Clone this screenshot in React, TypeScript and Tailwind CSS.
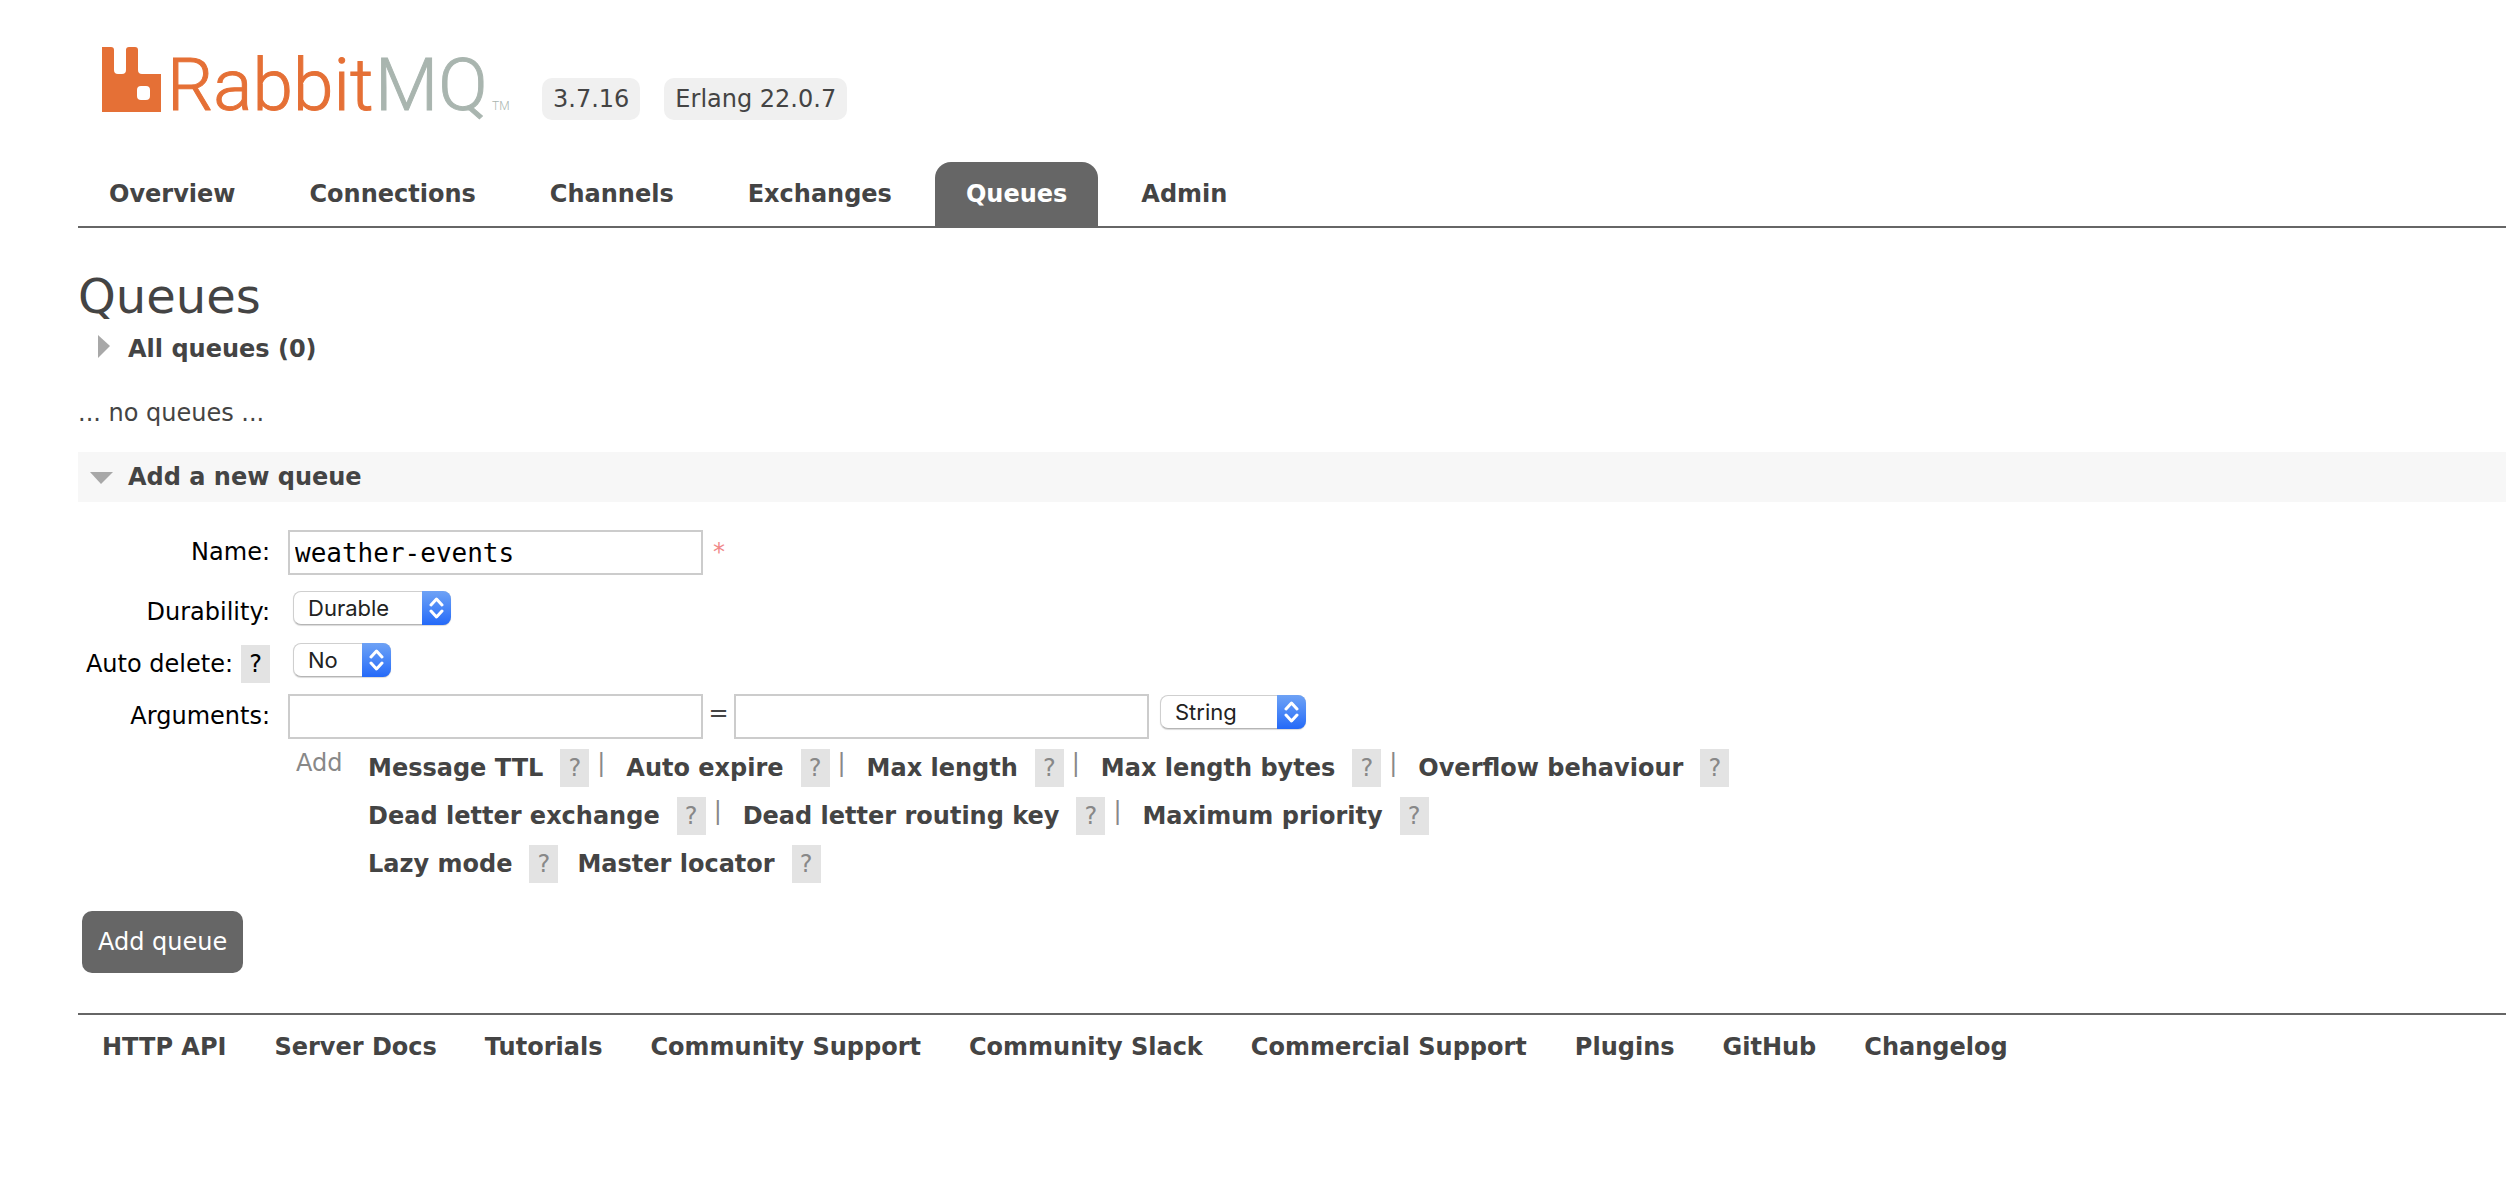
import type { ReactNode } from 'react';

const TABS = ['Overview', 'Connections', 'Channels', 'Exchanges', 'Queues', 'Admin'];

const ARGUMENT_ROWS = [
  ['Message TTL', 'Auto expire', 'Max length', 'Max length bytes', 'Overflow behaviour'],
  ['Dead letter exchange', 'Dead letter routing key', 'Maximum priority'],
  ['Lazy mode', 'Master locator'],
];

const FOOTER_LINKS = [
  'HTTP API',
  'Server Docs',
  'Tutorials',
  'Community Support',
  'Community Slack',
  'Commercial Support',
  'Plugins',
  'GitHub',
  'Changelog',
];

function Logo() {
  return (
    <svg width="416" height="104" viewBox="0 0 416 104" role="img" aria-label="RabbitMQ">
      <path
        fill="#e57036"
        fillRule="evenodd"
        d="M0 19h9q3 0 3 3v20q0 4 4 4h4q4 0 4-4v-20q0-3 3-3h6q3 0 3 3v20q0 4 4 4h19v38h-59zM39 58q-4 0-4 4v6q0 4 4 4h5q4 0 4-4v-6q0-4-4-4z"
      />
      <g fontFamily="Roboto, sans-serif" fontWeight="300">
        <text x="65" y="82" fontSize="73" fill="#e57036" stroke="#e57036">
          Rabbit
        </text>
        <text x="273" y="82" fontSize="73" fill="#a9b5af" stroke="#a9b5af">
          MQ
        </text>
        <text x="390" y="82" fontSize="12" fill="#a9b5af">
          TM
        </text>
      </g>
    </svg>
  );
}

function Version({ children }: { children: ReactNode }) {
  return <span className="rounded-[10px] bg-[#f0f0f0] px-[11px] py-[7px] leading-7">{children}</span>;
}

function Help({ topic }: { topic: string }) {
  return (
    <button type="button" aria-label={`Help: ${topic}`} className="h-[38px] w-[29px] bg-[#e3e3e3]">
      ?
    </button>
  );
}

function SectionTitle({ open, children }: { open?: boolean; children: ReactNode }) {
  return (
    <h2 className={open ? 'bg-[#f7f7f7]' : undefined}>
      <button type="button" aria-expanded={!!open} className="flex h-[50px] items-center font-bold">
        <svg width="50" height="28" viewBox="0 0 50 28" fill="#a8a8a8" aria-hidden>
          {open ? <path d="M12 9h23l-12 12z" /> : <path d="M20 0v23l12-12z" />}
        </svg>
        {children}
      </button>
    </h2>
  );
}

// Drop-down with the blue up/down handle on its right side.
function Select({ id, label, options, width }: { id: string; label?: string; options: string[]; width: string }) {
  return (
    <div className={`relative mt-px h-[34px] ${width}`}>
      <select
        id={id}
        aria-label={label}
        className="h-full w-full appearance-none rounded-lg border border-[#cfcfcf] border-b-[#b5b5b5] bg-white pl-[14px] font-[Inter,sans-serif] text-[22px] leading-7 text-[#222] shadow-[0_1px_1px_rgba(0,0,0,0.15)]"
      >
        {options.map((o) => (
          <option key={o}>{o}</option>
        ))}
      </select>
      <span className="pointer-events-none absolute inset-y-0 right-0 flex w-[29px] items-center justify-center rounded-r-lg bg-linear-to-b from-[#6ea2f5] to-[#2469f8]">
        <svg width="15" height="22" viewBox="0 0 15 22" fill="none" stroke="#fff" strokeWidth="3" aria-hidden>
          <path d="M2 8l5.500-6 5.500 6M2 14l5.500 6 5.500-6" strokeLinecap="round" strokeLinejoin="round" />
        </svg>
      </span>
    </div>
  );
}

function Field({ id, label, help, children }: { id: string; label: string; help?: boolean; children: ReactNode }) {
  return (
    <div className="flex items-start gap-[18px]">
      <div className="flex h-11 w-48 items-center justify-end gap-2 text-black">
        <label htmlFor={id}>{label}:</label>
        {help && <Help topic={label} />}
      </div>
      {children}
    </div>
  );
}

const inputClass = "h-[45px] w-[415px] border-2 border-[#ccc] bg-white px-[5px] font-['DejaVu_Sans_Mono',monospace] text-[26px] text-black";

export default function App() {
  return (
    <div className="min-h-screen bg-white pl-[78px] font-['DejaVu_Sans',Verdana,sans-serif] text-[24px] leading-7 text-[#444]">
      <header>
        <div className="flex items-end gap-6 pt-7 pl-6">
          <Logo />
          <div className="mb-3 flex gap-6">
            <Version>3.7.16</Version>
            <Version>Erlang 22.0.7</Version>
          </div>
        </div>
        <nav className="mt-[30px] flex gap-3 border-b-2 border-[#666]">
          {TABS.map((tab) => (
            <a
              key={tab}
              href="#"
              aria-current={tab === 'Queues' ? 'page' : undefined}
              className={`flex h-16 items-center px-[31px] font-bold ${tab === 'Queues' ? 'rounded-t-2xl bg-[#666] text-white' : ''}`}
            >
              {tab}
            </a>
          ))}
        </nav>
      </header>

      <main className="pt-10">
        <h1 className="text-5xl leading-[56px]">Queues</h1>
        <SectionTitle>All queues (0)</SectionTitle>
        <p className="my-[25px]">... no queues ...</p>
        <SectionTitle open>Add a new queue</SectionTitle>

        <form className="pt-7">
          <div className="flex flex-col">
            <Field id="name" label="Name">
              <div className="mb-[15px] flex gap-[10px]">
                <input id="name" required defaultValue="weather-events" className={inputClass} />
                <span className="pt-2 text-[#f08888]">*</span>
              </div>
            </Field>
            <Field id="durability" label="Durability">
              <div className="h-[52px] pl-[5px]">
                <Select id="durability" options={['Durable', 'Transient']} width="w-[158px]" />
              </div>
            </Field>
            <Field id="auto-delete" label="Auto delete" help>
              <div className="h-[52px] pl-[5px]">
                <Select id="auto-delete" options={['No', 'Yes']} width="w-[98px]" />
              </div>
            </Field>
            <Field id="arg-key" label="Arguments">
              <div>
                <div className="flex items-start">
                  <input id="arg-key" className={inputClass} />
                  <span className="w-[31px] pt-[5px] text-center">=</span>
                  <input aria-label="Argument value" className={inputClass} />
                  <div className="pl-[11px]">
                    <Select
                      id="arg-type"
                      label="Argument type"
                      options={['String', 'Number', 'Boolean', 'List']}
                      width="w-[146px]"
                    />
                  </div>
                </div>
                <div className="mt-[10px] flex pl-2 text-[#888]">
                  <span className="w-[72px]">Add</span>
                  <div>
                    {ARGUMENT_ROWS.map((row, r) => (
                      <div key={r} className="flex h-12 items-start">
                        {row.map((arg, i) => (
                          <div key={arg} className="flex items-start">
                            {i > 0 && (r < 2 ? <span className="w-[37px] pl-2">|</span> : <span className="w-[19px]" />)}
                            <span className="flex items-center gap-[17px]">
                              <button type="button" className="font-bold text-[#444]">
                                {arg}
                              </button>
                              <Help topic={arg} />
                            </span>
                          </div>
                        ))}
                      </div>
                    ))}
                  </div>
                </div>
              </div>
            </Field>
          </div>
          <button type="submit" className="mt-[18px] ml-1 h-[62px] rounded-[10px] bg-[#666] px-4 text-white">
            Add queue
          </button>
        </form>
      </main>

      <footer className="mt-10 flex gap-12 border-t-2 border-[#666] pt-[18px] pl-6 font-bold">
        {FOOTER_LINKS.map((link) => (
          <a key={link} href="#">
            {link}
          </a>
        ))}
      </footer>
    </div>
  );
}
